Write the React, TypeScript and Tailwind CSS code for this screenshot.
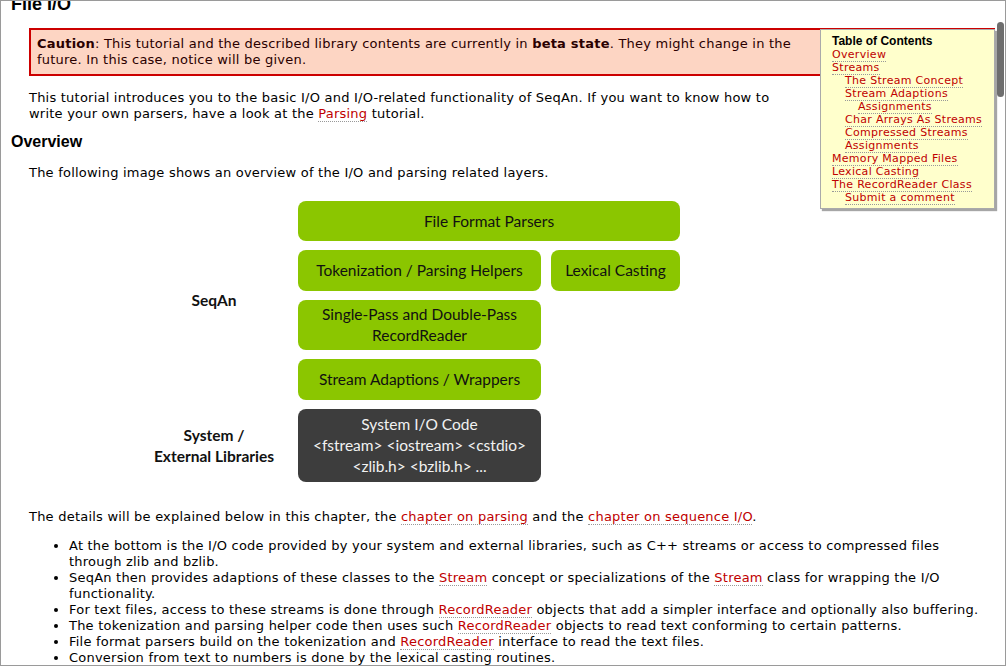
import React from 'react';

const body = "font-['DejaVu_Sans',Verdana,sans-serif] tracking-[0.22px]";
const head = "font-['Liberation_Sans',Arial,sans-serif] tracking-normal";
const diag = "font-['Lato','Open_Sans',sans-serif] tracking-normal";

function A({ children }: { children: React.ReactNode }) {
  return <a className="text-[#c00000] border-b border-dotted border-[#999]">{children}</a>;
}

const toc: [string, number][] = [
  ['Overview', 0],
  ['Streams', 0],
  ['The Stream Concept', 1],
  ['Stream Adaptions', 1],
  ['Assignments', 2],
  ['Char Arrays As Streams', 1],
  ['Compressed Streams', 1],
  ['Assignments', 1],
  ['Memory Mapped Files', 0],
  ['Lexical Casting', 0],
  ['The RecordReader Class', 0],
  ['Submit a comment', 1],
];

const indent = ['pl-0', 'pl-[13px]', 'pl-[26px]'];

function Toc() {
  return (
    <div className="float-right ml-[14px] mt-[14px] w-[175px] bg-[#ffffcc] border border-[#aaa] shadow-[2px_2px_1px_rgba(0,0,0,0.35)] pl-[11px] pr-[4px] pt-[4px] pb-[4px]">
      <div className={`${head} font-bold text-[12px] leading-[14px] text-black`}>Table of Contents</div>
      {toc.map(([t, lvl], i) => (
        <div key={i} className={`font-['DejaVu_Sans',Verdana,sans-serif] tracking-[0.3px] whitespace-nowrap text-[11px] leading-[13px] ${indent[lvl]}`}>
          <A>{t}</A>
        </div>
      ))}
    </div>
  );
}

const green = 'bg-[#8bc600] rounded-[8px] flex items-center justify-center text-center text-[#111]';

function Diagram() {
  return (
    <div className={`${diag} grid grid-cols-[148px_243px_129px] grid-rows-[40px_41px_50px_41px_73px] gap-x-[10px] gap-y-[9px] ml-[111px] mt-[20px] mb-[27px] text-[15.5px] leading-[21px]`}>
      <div className="row-start-1 row-end-5 col-start-1 flex items-center justify-center font-bold text-[#111]">SeqAn</div>
      <div className={`${green} col-start-2 col-end-4 row-start-1`}>File Format Parsers</div>
      <div className={`${green} col-start-2 row-start-2`}>Tokenization / Parsing Helpers</div>
      <div className={`${green} col-start-3 row-start-2`}>Lexical Casting</div>
      <div className={`${green} col-start-2 row-start-3`}>
        Single-Pass and Double-Pass
        <br />
        RecordReader
      </div>
      <div className={`${green} col-start-2 row-start-4`}>Stream Adaptions / Wrappers</div>
      <div className="row-start-5 col-start-1 flex items-center justify-center text-center font-bold text-[#111]">
        System /
        <br />
        External Libraries
      </div>
      <div className="col-start-2 row-start-5 bg-[#3d3d3d] rounded-[8px] flex items-center justify-center text-center text-[#f2f2f2]">
        System I/O Code
        <br />
        &lt;fstream&gt; &lt;iostream&gt; &lt;cstdio&gt;
        <br />
        &lt;zlib.h&gt; &lt;bzlib.h&gt; ...
      </div>
    </div>
  );
}

export default function App() {
  return (
    <div className="w-[1006px] h-[666px] border border-[#9a9a9a] bg-white overflow-hidden relative">
      <div className={`${body} text-[13px] leading-[16px] text-black pl-[10px] pr-[10px]`}>
        <h1 className={`${head} font-bold text-[18px] leading-[22px] -mt-[8px] text-black`}>File I/O</h1>
        <Toc />
        <div className="ml-[18px]">
          <div className="mt-[13px] border-2 border-[#cc0000] bg-[#fdd5c3] px-[6px] py-[6px] text-[#2a0000]">
            <b>Caution</b>: This tutorial and the described library contents are currently in <b>beta state</b>. They might change in the future. In this case, notice will be given.
          </div>
          <p className="mt-[14px]">
            This tutorial introduces you to the basic I/O and I/O-related functionality of SeqAn. If you want to know how to write your own parsers, have a look at the <A>Parsing</A> tutorial.
          </p>
        </div>
        <h2 className={`${head} font-bold text-[16px] leading-[18px] mt-[11px]`}>Overview</h2>
        <div className="ml-[18px]">
          <p className="mt-[14px]">The following image shows an overview of the I/O and parsing related layers.</p>
          <Diagram />
          <p>
            The details will be explained below in this chapter, the <A>chapter on parsing</A> and the <A>chapter on sequence I/O</A>.
          </p>
          <ul className="list-disc pl-[40px] mt-[13px]">
            <li>At the bottom is the I/O code provided by your system and external libraries, such as C++ streams or access to compressed files through zlib and bzlib.</li>
            <li>SeqAn then provides adaptions of these classes to the <A>Stream</A> concept or specializations of the <A>Stream</A> class for wrapping the I/O functionality.</li>
            <li>For text files, access to these streams is done through <A>RecordReader</A> objects that add a simpler interface and optionally also buffering.</li>
            <li>The tokenization and parsing helper code then uses such <A>RecordReader</A> objects to read text conforming to certain patterns.</li>
            <li>File format parsers build on the tokenization and <A>RecordReader</A> interface to read the text files.</li>
            <li>Conversion from text to numbers is done by the lexical casting routines.</li>
          </ul>
        </div>
      </div>
      <div className="absolute left-[996px] top-[21px] w-[7px] h-[75px] rounded-full bg-[#6e6e6e]" />
    </div>
  );
}
